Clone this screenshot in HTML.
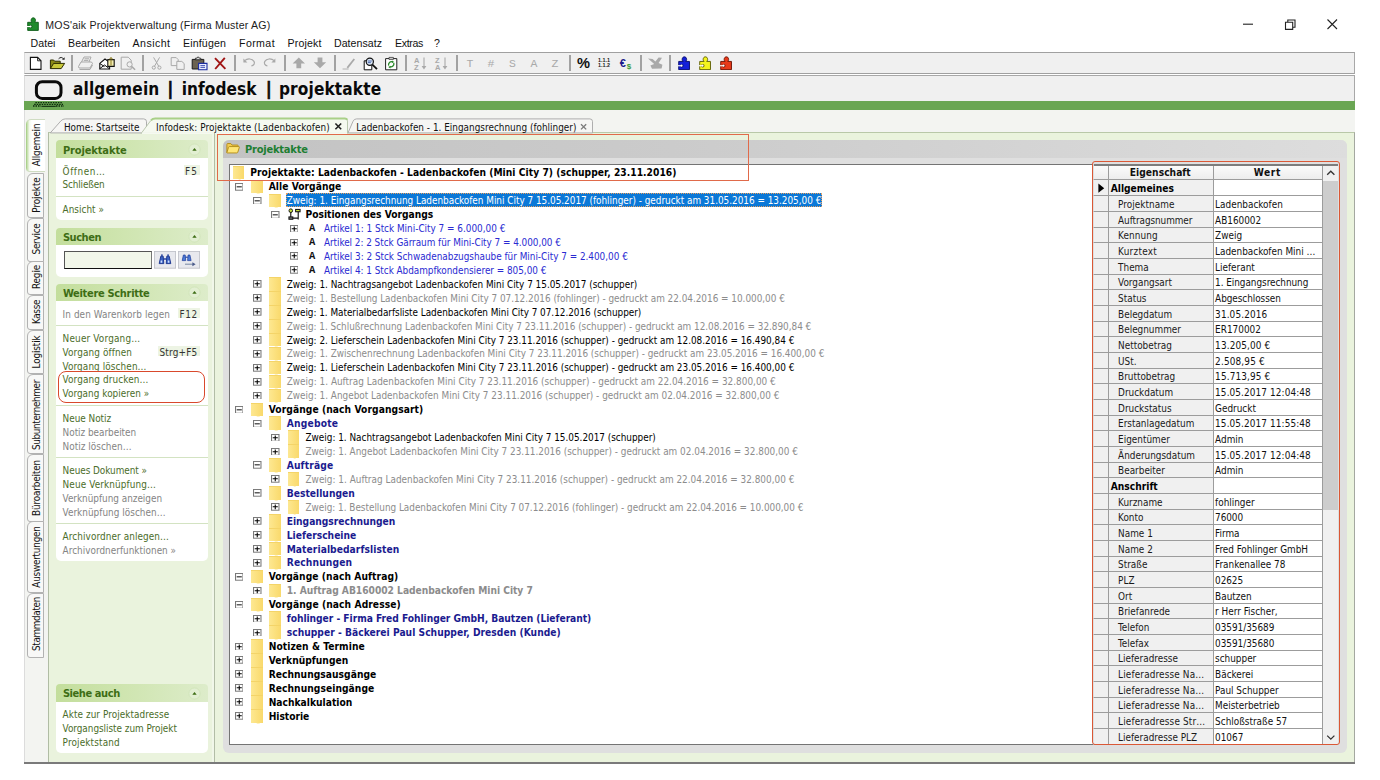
<!DOCTYPE html>
<html lang="de">
<head>
<meta charset="utf-8">
<title>MOS'aik Projektverwaltung (Firma Muster AG)</title>
<style>
html,body{margin:0;padding:0;background:#fff;}
body{width:1380px;height:780px;overflow:hidden;position:relative;font:9.9px 'DejaVu Sans Condensed','Liberation Sans',sans-serif;color:#000;}
#app{position:absolute;left:0;top:0;width:1380px;height:780px;overflow:hidden;background:#fff;}
#app div,#app span,#app svg{position:absolute;}
.t{white-space:pre;font:9.9px 'DejaVu Sans Condensed','Liberation Sans',sans-serif;}
.t.b{font:bold 10.2px 'DejaVu Sans Condensed','Liberation Sans',sans-serif;}
.fo{width:11.6px;height:13.6px;background:linear-gradient(90deg,#fde892 0%,#fbdf7a 60%,#f9d96c 100%);box-shadow:inset 0 1px 0 #f4d468,1.2px 5px 0 -4.500px #fae382;}
.sep{width:1.5px;height:16.4px;top:54.8px;background:#a2a2a2;}
</style>
</head>
<body>
<div id="app">
<span class="t" style="font:10.6px 'Liberation Sans',sans-serif;left:45.30px;top:17.79px;line-height:14px;color:#1c1c1c;letter-spacing:0.193px;">MOS'aik Projektverwaltung (Firma Muster AG)</span>
<svg style="left:26.5px;top:16.8px" width="12.0" height="14.0" viewBox="0 0 12 14"><path d="M0.700 5.300h4.300c-1.600-1.200-1-4.500 1.300-4.500s2.900 3.300 1.300 4.500h3.700v8.100h-10.600z" fill="#1f8a2c" stroke="#0c5a16" stroke-width="0.900"/><circle cx="3.700" cy="9.500" r="1.700" fill="#0c5a16"/><circle cx="3.500" cy="9.500" r="1.050" fill="#fff"/><path d="M0 9h3.400v1.100h-3.400z" fill="#fff"/></svg>
<svg style="left:1240px;top:14px" width="110" height="22" viewBox="0 0 110 22"><g fill="none" stroke="#222" stroke-width="1.1"><path d="M3 10.2h10"/><path d="M45.5 8.2h7.2v7.2h-7.2z M47.8 8.2v-2.2h7.2v7.2h-2.2"/><path d="M87.5 5.5l9.5 9.5M97 5.5l-9.5 9.5"/></g></svg>
<span class="t" style="font:10.6px 'Liberation Sans',sans-serif;left:30.50px;top:36.39px;line-height:14px;color:#111;letter-spacing:0.053px;">Datei</span>
<span class="t" style="font:10.6px 'Liberation Sans',sans-serif;left:68.00px;top:36.39px;line-height:14px;color:#111;letter-spacing:0.075px;">Bearbeiten</span>
<span class="t" style="font:10.6px 'Liberation Sans',sans-serif;left:132.50px;top:36.39px;line-height:14px;color:#111;letter-spacing:0.464px;">Ansicht</span>
<span class="t" style="font:10.6px 'Liberation Sans',sans-serif;left:183.00px;top:36.39px;line-height:14px;color:#111;letter-spacing:0.146px;">Einfügen</span>
<span class="t" style="font:10.6px 'Liberation Sans',sans-serif;left:239.00px;top:36.39px;line-height:14px;color:#111;letter-spacing:0.406px;">Format</span>
<span class="t" style="font:10.6px 'Liberation Sans',sans-serif;left:287.50px;top:36.39px;line-height:14px;color:#111;letter-spacing:0.145px;">Projekt</span>
<span class="t" style="font:10.6px 'Liberation Sans',sans-serif;left:334.00px;top:36.39px;line-height:14px;color:#111;letter-spacing:0.033px;">Datensatz</span>
<span class="t" style="font:10.6px 'Liberation Sans',sans-serif;left:395.00px;top:36.39px;line-height:14px;color:#111;letter-spacing:-0.339px;">Extras</span>
<span class="t" style="font:10.6px 'Liberation Sans',sans-serif;left:434.00px;top:36.39px;line-height:14px;color:#111;">?</span>
<div style="position:absolute;left:24.00px;top:52.00px;width:1331.00px;height:21.50px;background:#f0f0f0;border-top:1.3px solid #a0a0a0;border-bottom:1.3px solid #a0a0a0;border-left:1px solid #dcdcdc;border-right:1px solid #a8a8a8;box-sizing:border-box;"></div>
<div class="sep" style="left:71.2px"></div>
<div class="sep" style="left:142.2px"></div>
<div class="sep" style="left:234.2px"></div>
<div class="sep" style="left:284.2px"></div>
<div class="sep" style="left:334.2px"></div>
<div class="sep" style="left:405.2px"></div>
<div class="sep" style="left:456.2px"></div>
<div class="sep" style="left:569.2px"></div>
<div class="sep" style="left:640.2px"></div>
<div class="sep" style="left:669.2px"></div>
<svg style="left:24px;top:52px" width="720" height="22" viewBox="24 52 720 22" font-family="Liberation Sans,sans-serif"><path d="M30.4 57.4h7.2l3.4 3.4v8.6h-10.6z" fill="#fff" stroke="#111" stroke-width="1.1"/><path d="M37.6 57.4v3.4h3.4" fill="none" stroke="#111" stroke-width="0.9"/><path d="M50.4 68.6v-8.6h3.2l1 1.2h5.6v2.2" fill="#8a8a18" stroke="#2c2c00" stroke-width="1"/><path d="M50.4 68.6l3.2-5.2h11l-3.4 5.2z" fill="#c9c93a" stroke="#2c2c00" stroke-width="1"/><path d="M58.6 58.8c1.6-1.8 3.8-1.8 5 0.2" fill="none" stroke="#222" stroke-width="1"/><path d="M64.6 57.2v2.6h-2.6z" fill="#222"/><g fill="none" stroke="#a9a9a9" stroke-width="1"><path d="M81.5 62l2.5-5h7l-2 5"/><path d="M78.5 66.5l2.5-4.5h10.5l1 1.5-2.5 4.5h-11z"/><path d="M79.5 69.5h10.5l2.5-4.5"/><path d="M84.5 58.8h4.5M83.8 60.4h4.5"/></g><path d="M99.8 63.4l5.2-4.4 4.6 3.2v6.8h-9.8z" fill="#fff" stroke="#111" stroke-width="1.1"/><path d="M99.8 68.6l4.8-3.6 4.6 3.6M99.9 63.6l4.6 3" fill="none" stroke="#111" stroke-width="1"/><path d="M107.8 66.4v-6.8h6.4v6.8z" fill="#f3ecb0" stroke="#111" stroke-width="1.1"/><path d="M111 65.4v-7.6M109.3 59.4l1.7-2 1.7 2" fill="none" stroke="#8a7a20" stroke-width="1"/><g fill="none" stroke="#a9a9a9" stroke-width="1"><path d="M121.2 57.2h7l3 3v9h-10z"/><circle cx="129.6" cy="64.4" r="2.6" fill="#f0f0f0"/><path d="M131.5 66.4l3.6 3.4" stroke-width="1.5"/></g><g fill="none" stroke="#a9a9a9" stroke-width="1"><path d="M153.6 57.4l5.2 9M159.6 57.4l-5.2 9"/><circle cx="153.8" cy="67.6" r="1.6"/><circle cx="159.4" cy="67.6" r="1.6"/></g><g fill="#f0f0f0" stroke="#a9a9a9" stroke-width="1"><path d="M171.2 57.6h5l2 2v6h-7z"/><path d="M176.8 61.4h5l2.4 2.2v5.8h-7.4z"/></g><path d="M192.2 59.4h11.6v9.6h-11.6z" fill="#6b6250" stroke="#1a1a1a" stroke-width="1"/><path d="M195.4 59.8v-1.6h1.4l0.8-1.2h1l0.8 1.2h1.4v1.6z" fill="#d8d8d8" stroke="#1a1a1a" stroke-width="0.8"/><path d="M198.6 63.4h8.4v6.4h-8.4z" fill="#e8ecff" stroke="#1c2ca0" stroke-width="1.1"/><path d="M200.4 65.6h4.6M200.4 67.4h4.6" stroke="#1c2ca0" stroke-width="0.8"/><path d="M215 58.2l10.4 10.6M224.8 57.8l-9.6 11.2" fill="none" stroke="#a01414" stroke-width="1.9"/><g fill="none" stroke="#a9a9a9" stroke-width="1.2"><path d="M244.6 60.6c3.2-2.6 7.6-2 9.4 0.8 1.2 2.2-0.4 4.2-2.6 4.4"/><path d="M274.2 60.6c-3.2-2.6-7.6-2-9.4 0.8-1.2 2.200.4 4.200 2.600 4.400"/></g><path d="M243.4 58.4v4h4z" fill="#a9a9a9"/><path d="M275.400 58.400v4h-4z" fill="#a9a9a9"/><path d="M298.800 57.600l6.200 6h-3.800v4.600h-4.800v-4.600h-3.800z" fill="#a9a9a9"/><path d="M320 68.200l6.200-6h-3.800v-4.600h-4.800v4.600h-3.800z" fill="#a9a9a9"/><path d="M346.600 67.200l7-8.800 1.400 1.200-7 8.800z" fill="#a9a9a9"/><path d="M342.600 69h6" stroke="#a9a9a9" stroke-width="0.9"/><path d="M364.200 60.800h7.600v9h-7.600z" fill="#fff" stroke="#111" stroke-width="1"/><circle cx="369.800" cy="61.800" r="3.600" fill="#d8e4f4" stroke="#111" stroke-width="1.200"/><path d="M367.800 61h4M367.800 62.600h3" stroke="#2a4a9a" stroke-width="0.800"/><path d="M372.400 64.600l4.600 4.600" stroke="#111" stroke-width="1.800"/><path d="M385.600 58.600h11.200v11.200h-11.200z" fill="#fff" stroke="#222" stroke-width="1"/><path d="M389 57.400h4.400v2h-4.400z" fill="#ddd" stroke="#222" stroke-width="0.700"/><path d="M388.600 65.600c-0.600-2.600 1.600-4.600 4-3.800M393.800 62.800c0.600 2.600-1.600 4.600-4 3.800" fill="none" stroke="#2a8a2a" stroke-width="1.300"/><path d="M392 60.400l2.200 1.600-2.400 1.200zM390.400 68.600l-2.200-1.600 2.400-1.200z" fill="#2a8a2a"/><g fill="#a9a9a9" font-size="7.500" font-weight="bold"><text x="414" y="62.800">A</text><text x="414" y="69.600">Z</text><text x="435" y="62.800">Z</text><text x="435" y="69.600">A</text></g><g stroke="#a9a9a9" stroke-width="1.100" fill="#a9a9a9"><path d="M424 57.600v9.600"/><path d="M421.600 66l2.400 3.400 2.400-3.400z" stroke="none"/><path d="M445 57.600v9.600"/><path d="M442.600 66l2.400 3.400 2.400-3.400z" stroke="none"/></g><g fill="#a9a9a9" font-size="11.500" text-anchor="middle" font-family="Liberation Mono,monospace"><text x="470" y="67">T</text><text x="491" y="67">#</text><text x="512.500" y="67">S</text><text x="534" y="67">A</text><text x="555" y="67">Z</text></g><text x="577" y="68.200" font-size="14" font-weight="bold" fill="#111" textLength="13" lengthAdjust="spacingAndGlyphs">%</text><g fill="#1c1c1c" font-size="6" font-weight="bold"><text x="598" y="62" textLength="12" lengthAdjust="spacingAndGlyphs">1.1.1</text><text x="598" y="67.400" textLength="12" lengthAdjust="spacingAndGlyphs">1.1.2</text></g><path d="M598.500 69.400h3.500" stroke="#888" stroke-width="0.600" stroke-dasharray="1 0.600"/><text x="619.800" y="66.800" font-size="11" font-weight="bold" fill="#1a1a8a">€</text><text x="626.800" y="69" font-size="8" font-weight="bold" fill="#3a9a3a">$</text><path d="M648 58.600l4.600 0.400 2.800 2.600 3.200-4 3.400 0.200-3.400 5.200 3.800 1.800-0.800 3.600-9.600 0.400-1.600-3.200 3.800-1.600z" fill="#a9a9a9"/></svg>
<svg style="left:677.6px;top:55.6px" width="12.2" height="14.3" viewBox="0 0 12 14"><path d="M0.700 5.300h4.300c-1.600-1.200-1-4.500 1.300-4.500s2.900 3.300 1.300 4.500h3.700v8.100h-10.600z" fill="#1420d8" stroke="#060a6a" stroke-width="0.900"/><circle cx="3.700" cy="9.500" r="1.700" fill="#060a6a"/><circle cx="3.500" cy="9.500" r="1.050" fill="#fff"/><path d="M0 9h3.400v1.100h-3.400z" fill="#fff"/></svg>
<svg style="left:698.6px;top:55.6px" width="12.2" height="14.3" viewBox="0 0 12 14"><path d="M0.700 5.300h4.300c-1.600-1.200-1-4.500 1.300-4.500s2.900 3.300 1.300 4.500h3.700v8.100h-10.600z" fill="#f4f41e" stroke="#5a5a00" stroke-width="0.900"/><circle cx="3.700" cy="9.500" r="1.700" fill="#5a5a00"/><circle cx="3.500" cy="9.500" r="1.050" fill="#fff"/><path d="M0 9h3.400v1.100h-3.400z" fill="#fff"/></svg>
<svg style="left:720.2px;top:55.6px" width="12.2" height="14.3" viewBox="0 0 12 14"><path d="M0.700 5.300h4.300c-1.600-1.200-1-4.500 1.300-4.500s2.900 3.300 1.300 4.500h3.700v8.100h-10.600z" fill="#e83a1a" stroke="#6a1000" stroke-width="0.900"/><circle cx="3.700" cy="9.500" r="1.700" fill="#6a1000"/><circle cx="3.500" cy="9.500" r="1.050" fill="#fff"/><path d="M0 9h3.400v1.100h-3.400z" fill="#fff"/></svg>
<div style="position:absolute;left:24.00px;top:75.20px;width:1331.00px;height:26.00px;background:#f0f0f0;border-top:1.2px solid #a8a8a8;border-left:1px solid #dcdcdc;border-right:1px solid #a8a8a8;box-sizing:border-box;"></div>
<div style="position:absolute;left:24.00px;top:100.80px;width:1331.00px;height:9.60px;background:#6aa653;"></div>
<svg style="left:30px;top:78px" width="40" height="30" viewBox="30 78 40 30"><rect x="36.400" y="81.700" width="24.600" height="16.800" rx="5.800" ry="5.800" fill="#f0f0f0" stroke="#0a0a0a" stroke-width="3"/><g stroke="#0c2a0c" stroke-width="1.300" stroke-dasharray="1.500 1"><path d="M35.400 102.600h26.400"/><path d="M34.200 104.300h28.800"/><path d="M33 106h8M56 106h8"/></g><path d="M41.400 106.300h14.400" stroke="#0c2a0c" stroke-width="1.100"/></svg>
<span class="t" style="font:bold 17.1px 'DejaVu Sans Condensed','Liberation Sans',sans-serif;left:72.90px;top:79.35px;line-height:20px;color:#0a0a0a;letter-spacing:0.174px;">allgemein</span>
<span class="t" style="font:bold 17.1px 'DejaVu Sans Condensed','Liberation Sans',sans-serif;left:167.40px;top:79.35px;line-height:20px;color:#0a0a0a;-webkit-text-stroke:0.700px #0a0a0a;">|</span>
<span class="t" style="font:bold 17.1px 'DejaVu Sans Condensed','Liberation Sans',sans-serif;left:181.70px;top:79.35px;line-height:20px;color:#0a0a0a;letter-spacing:0.063px;">infodesk</span>
<span class="t" style="font:bold 17.1px 'DejaVu Sans Condensed','Liberation Sans',sans-serif;left:265.90px;top:79.35px;line-height:20px;color:#0a0a0a;-webkit-text-stroke:0.700px #0a0a0a;">|</span>
<span class="t" style="font:bold 17.1px 'DejaVu Sans Condensed','Liberation Sans',sans-serif;left:278.90px;top:79.35px;line-height:20px;color:#0a0a0a;letter-spacing:0.143px;">projektakte</span>
<div style="position:absolute;left:24.00px;top:110.40px;width:1331.00px;height:653.00px;background:#f3f4f1;border-left:1px solid #dcdcdc;box-sizing:border-box;"></div>
<div style="position:absolute;left:24.00px;top:762.40px;width:1331.00px;height:1.60px;background:#7a7a7a;"></div>
<div style="position:absolute;left:26.20px;top:118.60px;width:18.40px;height:53.70px;background:linear-gradient(90deg,#9cc97a 0,#c9e1b2 1.500px,#f4f9ee 3.500px,#fff 6px);border-top:1px solid #cfdcc2;border-bottom:1px solid #cfdcc2;border-radius:5px 0 0 4px;box-sizing:border-box;"></div>
<span class="t" style="left:36.800px;top:145.15px;line-height:12px;letter-spacing:-0.184px;transform:translate(-50%,-50%) rotate(-90deg);color:#111">Allgemein</span>
<div style="position:absolute;left:27.40px;top:172.60px;width:16.20px;height:45.40px;background:#f8f8f7;border:1px solid #b2b2b2;border-radius:6px 0 0 3px;box-sizing:border-box;"></div>
<span class="t" style="left:36.800px;top:195.05px;line-height:12px;letter-spacing:-0.099px;transform:translate(-50%,-50%) rotate(-90deg);color:#111">Projekte</span>
<div style="position:absolute;left:27.40px;top:217.60px;width:16.20px;height:44.10px;background:#f8f8f7;border:1px solid #b2b2b2;border-radius:6px 0 0 3px;box-sizing:border-box;"></div>
<span class="t" style="left:36.800px;top:238.50px;line-height:12px;letter-spacing:-0.263px;transform:translate(-50%,-50%) rotate(-90deg);color:#111">Service</span>
<div style="position:absolute;left:27.40px;top:261.30px;width:16.20px;height:33.90px;background:#f8f8f7;border:1px solid #b2b2b2;border-radius:6px 0 0 3px;box-sizing:border-box;"></div>
<span class="t" style="left:36.800px;top:277.10px;line-height:12px;letter-spacing:-0.116px;transform:translate(-50%,-50%) rotate(-90deg);color:#111">Regie</span>
<div style="position:absolute;left:27.40px;top:294.80px;width:16.20px;height:35.50px;background:#f8f8f7;border:1px solid #b2b2b2;border-radius:6px 0 0 3px;box-sizing:border-box;"></div>
<span class="t" style="left:36.800px;top:312.30px;line-height:12px;letter-spacing:-0.366px;transform:translate(-50%,-50%) rotate(-90deg);color:#111">Kasse</span>
<div style="position:absolute;left:27.40px;top:329.90px;width:16.20px;height:44.30px;background:#f8f8f7;border:1px solid #b2b2b2;border-radius:6px 0 0 3px;box-sizing:border-box;"></div>
<span class="t" style="left:36.800px;top:351.90px;line-height:12px;letter-spacing:-0.131px;transform:translate(-50%,-50%) rotate(-90deg);color:#111">Logistik</span>
<div style="position:absolute;left:27.40px;top:373.80px;width:16.20px;height:80.40px;background:#f8f8f7;border:1px solid #b2b2b2;border-radius:6px 0 0 3px;box-sizing:border-box;"></div>
<span class="t" style="left:36.800px;top:414.55px;line-height:12px;letter-spacing:-0.372px;transform:translate(-50%,-50%) rotate(-90deg);color:#111">Subunternehmer</span>
<div style="position:absolute;left:27.40px;top:453.80px;width:16.20px;height:67.90px;background:#f8f8f7;border:1px solid #b2b2b2;border-radius:6px 0 0 3px;box-sizing:border-box;"></div>
<span class="t" style="left:36.800px;top:487.75px;line-height:12px;letter-spacing:-0.147px;transform:translate(-50%,-50%) rotate(-90deg);color:#111">Büroarbeiten</span>
<div style="position:absolute;left:27.40px;top:521.30px;width:16.20px;height:71.70px;background:#f8f8f7;border:1px solid #b2b2b2;border-radius:6px 0 0 3px;box-sizing:border-box;"></div>
<span class="t" style="left:36.800px;top:556.50px;line-height:12px;letter-spacing:-0.235px;transform:translate(-50%,-50%) rotate(-90deg);color:#111">Auswertungen</span>
<div style="position:absolute;left:27.40px;top:592.60px;width:16.20px;height:65.10px;background:#f8f8f7;border:1px solid #b2b2b2;border-radius:6px 0 0 3px;box-sizing:border-box;"></div>
<span class="t" style="left:36.800px;top:624.30px;line-height:12px;letter-spacing:-0.375px;transform:translate(-50%,-50%) rotate(-90deg);color:#111">Stammdaten</span>
<div style="position:absolute;left:47.70px;top:132.00px;width:1307.30px;height:630.40px;background:#eaf3dd;border-top:1.200px solid #b9c8a8;border-left:1px solid #b0bca4;border-right:1.200px solid #a4a8a0;box-sizing:border-box;"></div>
<svg style="left:46px;top:116px" width="560" height="18" viewBox="46 116 560 18"><path d="M50.300 132.900l10.600-12q1.800-2 4.400-2h78.400q2.800 0 2.800 2.800v11.200z" fill="#f6f6f4" stroke="#a6a6a6" stroke-width="0.900"/><path d="M348 132.900l5-11.600q1-2.400 3.600-2.400h233.300q2.600 0 2.600 2.600v11.400z" fill="#f6f6f4" stroke="#a6a6a6" stroke-width="0.900"/><path d="M141.200 133.400l9.400-12.600q1.800-2.300 4.600-2.300h189.700q2.600 0 2.600 2.600v12.300z" fill="#f5f9f0" stroke="#b3c2a6" stroke-width="0.900"/><path d="M151 120.200q1.800-1.700 4.200-1.700h189.700q1.800 0 2.400 1.200" fill="none" stroke="#a9d088" stroke-width="2"/><path d="M141.800 133.500h205.300" stroke="#f5f9f0" stroke-width="1.800"/><path d="M335.400 123.500l5.800 5.800M341.200 123.500l-5.800 5.800" stroke="#222" stroke-width="1.600"/><path d="M581 124.200l5.200 5.200M586.200 124.200l-5.200 5.200" stroke="#7a7a7a" stroke-width="1.300"/></svg>
<span class="t" style="left:63.90px;top:120.60px;line-height:14px;color:#111;letter-spacing:0.026px;">Home: Startseite</span>
<span class="t" style="left:156.00px;top:120.60px;line-height:14px;color:#111;letter-spacing:0.074px;">Infodesk: Projektakte (Ladenbackofen)</span>
<span class="t" style="left:356.30px;top:120.60px;line-height:14px;color:#111;letter-spacing:0.012px;">Ladenbackofen - 1. Eingangsrechnung (fohlinger)</span>
<div style="position:absolute;left:212.20px;top:133.40px;width:1.60px;height:629.00px;background:#f1f7e9;"></div>
<div style="position:absolute;left:214.10px;top:133.40px;width:1.10px;height:629.00px;background:#b2bda6;"></div>
<div style="position:absolute;left:55.80px;top:140.30px;width:152.20px;height:17.70px;background:linear-gradient(90deg,#c3de9c 0%,#cfe5b0 45%,#ddecca 100%);border-radius:4px 4px 0 0;"></div>
<div style="position:absolute;left:55.80px;top:158.00px;width:152.20px;height:62.00px;background:#fff;border-radius:0 0 5px 5px;"></div>
<span class="t" style="font:bold 11px 'DejaVu Sans Condensed','Liberation Sans',sans-serif;left:62.90px;top:143.55px;line-height:14px;color:#3d6d15;letter-spacing:-0.124px;">Projektakte</span>
<svg style="left:188px;top:142.95px" width="13" height="13" viewBox="0 0 13 13"><circle cx="6.500" cy="6.500" r="5.600" fill="#e2efd2" stroke="#cfe3b8" stroke-width="0.800"/><path d="M4.300 7.700l2.200-2.600 2.200 2.600z" fill="#3d6d15"/></svg>
<span class="t" style="left:62.60px;top:164.50px;line-height:14px;color:#4b6d2a;letter-spacing:0.567px;">Öffnen…</span>
<div style="position:absolute;left:183.60px;top:164.70px;width:16.60px;height:10.80px;background:#edf4e4;"></div>
<span class="t" style="left:185.10px;top:164.50px;line-height:14px;color:#333;letter-spacing:0.967px;">F5</span>
<span class="t" style="left:62.60px;top:178.30px;line-height:14px;color:#4b6d2a;letter-spacing:-0.155px;">Schließen</span>
<div style="position:absolute;left:55.80px;top:196.20px;width:152.20px;height:1.00px;background:#d3e3c2;"></div>
<span class="t" style="left:62.60px;top:202.50px;line-height:14px;color:#4b6d2a;letter-spacing:0.034px;">Ansicht »</span>
<div style="position:absolute;left:55.80px;top:227.60px;width:152.20px;height:17.40px;background:linear-gradient(90deg,#c3de9c 0%,#cfe5b0 45%,#ddecca 100%);border-radius:4px 4px 0 0;"></div>
<div style="position:absolute;left:55.80px;top:245.00px;width:152.20px;height:31.70px;background:#fff;border-radius:0 0 5px 5px;"></div>
<span class="t" style="font:bold 11px 'DejaVu Sans Condensed','Liberation Sans',sans-serif;left:62.90px;top:230.70px;line-height:14px;color:#3d6d15;letter-spacing:-0.443px;">Suchen</span>
<svg style="left:188px;top:230.10px" width="13" height="13" viewBox="0 0 13 13"><circle cx="6.500" cy="6.500" r="5.600" fill="#e2efd2" stroke="#cfe3b8" stroke-width="0.800"/><path d="M4.300 7.700l2.200-2.600 2.200 2.600z" fill="#3d6d15"/></svg>
<div style="position:absolute;left:63.60px;top:251.30px;width:88.60px;height:17.60px;background:#f2f7ea;border:1.4px solid #555;border-bottom-color:#111;border-right-color:#777;box-sizing:border-box;"></div>
<svg style="left:154px;top:251.400px" width="22" height="17.600" viewBox="0 0 22 17.600"><rect x="0.400" y="0.400" width="21.200" height="16.800" fill="#e8e9ee" stroke="#bfc1c8" stroke-width="0.900"/><path d="M5.200 12.600l1.600-7.400h2.400l0.600 7.400zM12.200 12.600l0.600-7.400h2.400l1.600 7.400z" fill="#3a62c4" stroke="#15308a" stroke-width="0.900"/><path d="M6.600 9.400h1.600v2.400h-1.600zM13.800 9.400h1.600v2.400h-1.600z" fill="#cfe0ff"/><path d="M9.600 8h2.800" stroke="#1a3a9a" stroke-width="1.400"/><path d="M7 4.200h1.800M13.200 4.200h1.800" stroke="#1a3a9a" stroke-width="1.200"/></svg>
<svg style="left:178.3px;top:251.400px" width="22" height="17.600" viewBox="0 0 22 17.600"><rect x="0.400" y="0.400" width="21.200" height="16.800" fill="#e8e9ee" stroke="#bfc1c8" stroke-width="0.900"/><path d="M4.200 9.600l1.200-5.600h1.800l0.500 5.600zM9.600 9.600l0.500-5.600h1.800l1.200 5.600z" fill="#4c7ad6" stroke="#1a3a9a" stroke-width="0.700"/><path d="M7.500 6.200h2.300" stroke="#1a3a9a" stroke-width="1.100"/><path d="M7 13.200h8" stroke="#6a7a9a" stroke-width="0.900"/><path d="M14.400 11.200l3.200 2-3.200 2z" fill="#4a5a8a"/></svg>
<div style="position:absolute;left:55.80px;top:284.20px;width:152.20px;height:16.60px;background:linear-gradient(90deg,#c3de9c 0%,#cfe5b0 45%,#ddecca 100%);border-radius:4px 4px 0 0;"></div>
<div style="position:absolute;left:55.80px;top:300.80px;width:152.20px;height:260.00px;background:#fff;border-radius:0 0 5px 5px;"></div>
<span class="t" style="font:bold 11px 'DejaVu Sans Condensed','Liberation Sans',sans-serif;left:62.90px;top:286.90px;line-height:14px;color:#3d6d15;letter-spacing:-0.313px;">Weitere Schritte</span>
<svg style="left:188px;top:286.30px" width="13" height="13" viewBox="0 0 13 13"><circle cx="6.500" cy="6.500" r="5.600" fill="#e2efd2" stroke="#cfe3b8" stroke-width="0.800"/><path d="M4.300 7.700l2.200-2.600 2.200 2.600z" fill="#3d6d15"/></svg>
<span class="t" style="left:62.60px;top:307.50px;line-height:14px;color:#848484;letter-spacing:0.074px;">In den Warenkorb legen</span>
<div style="position:absolute;left:178.00px;top:307.70px;width:22.20px;height:10.80px;background:#edf4e4;"></div>
<span class="t" style="left:179.50px;top:307.50px;line-height:14px;color:#333;letter-spacing:0.626px;">F12</span>
<div style="position:absolute;left:55.80px;top:324.80px;width:152.20px;height:1.00px;background:#d3e3c2;"></div>
<span class="t" style="left:62.60px;top:331.60px;line-height:14px;color:#4b6d2a;letter-spacing:0.182px;">Neuer Vorgang…</span>
<span class="t" style="left:62.60px;top:345.50px;line-height:14px;color:#4b6d2a;letter-spacing:0.122px;">Vorgang öffnen</span>
<div style="position:absolute;left:158.00px;top:345.70px;width:42.20px;height:10.80px;background:#edf4e4;"></div>
<span class="t" style="left:159.50px;top:345.50px;line-height:14px;color:#333;letter-spacing:0.221px;">Strg+F5</span>
<span class="t" style="left:62.60px;top:359.50px;line-height:14px;color:#4b6d2a;letter-spacing:0.098px;">Vorgang löschen…</span>
<span class="t" style="left:62.60px;top:373.30px;line-height:14px;color:#4b6d2a;letter-spacing:0.126px;">Vorgang drucken…</span>
<span class="t" style="left:62.60px;top:387.10px;line-height:14px;color:#4b6d2a;letter-spacing:0.039px;">Vorgang kopieren »</span>
<div style="position:absolute;left:55.80px;top:404.80px;width:152.20px;height:1.00px;background:#d3e3c2;"></div>
<span class="t" style="left:62.60px;top:411.60px;line-height:14px;color:#4b6d2a;letter-spacing:-0.023px;">Neue Notiz</span>
<span class="t" style="left:62.60px;top:425.50px;line-height:14px;color:#848484;letter-spacing:-0.023px;">Notiz bearbeiten</span>
<span class="t" style="left:62.60px;top:439.50px;line-height:14px;color:#848484;letter-spacing:0.032px;">Notiz löschen…</span>
<div style="position:absolute;left:55.80px;top:457.10px;width:152.20px;height:1.00px;background:#d3e3c2;"></div>
<span class="t" style="left:62.60px;top:463.80px;line-height:14px;color:#4b6d2a;letter-spacing:-0.032px;">Neues Dokument »</span>
<span class="t" style="left:62.60px;top:477.80px;line-height:14px;color:#4b6d2a;letter-spacing:0.121px;">Neue Verknüpfung…</span>
<span class="t" style="left:62.60px;top:491.60px;line-height:14px;color:#848484;letter-spacing:-0.017px;">Verknüpfung anzeigen</span>
<span class="t" style="left:62.60px;top:505.50px;line-height:14px;color:#848484;letter-spacing:0.031px;">Verknüpfung löschen…</span>
<div style="position:absolute;left:55.80px;top:522.80px;width:152.20px;height:1.00px;background:#d3e3c2;"></div>
<span class="t" style="left:62.60px;top:530.00px;line-height:14px;color:#4b6d2a;letter-spacing:0.090px;">Archivordner anlegen…</span>
<span class="t" style="left:62.60px;top:543.80px;line-height:14px;color:#848484;letter-spacing:0.022px;">Archivordnerfunktionen »</span>
<div style="position:absolute;left:58.20px;top:370.70px;width:146.90px;height:31.90px;border:1.800px solid #d9492c;border-radius:8px;box-sizing:border-box;"></div>
<div style="position:absolute;left:55.80px;top:684.00px;width:152.20px;height:17.60px;background:linear-gradient(90deg,#c3de9c 0%,#cfe5b0 45%,#ddecca 100%);border-radius:4px 4px 0 0;"></div>
<div style="position:absolute;left:55.80px;top:701.60px;width:152.20px;height:51.20px;background:#fff;border-radius:0 0 5px 5px;"></div>
<span class="t" style="font:bold 11px 'DejaVu Sans Condensed','Liberation Sans',sans-serif;left:62.90px;top:687.20px;line-height:14px;color:#3d6d15;letter-spacing:-0.418px;">Siehe auch</span>
<svg style="left:188px;top:686.60px" width="13" height="13" viewBox="0 0 13 13"><circle cx="6.500" cy="6.500" r="5.600" fill="#e2efd2" stroke="#cfe3b8" stroke-width="0.800"/><path d="M4.300 7.700l2.200-2.600 2.200 2.600z" fill="#3d6d15"/></svg>
<span class="t" style="left:62.60px;top:707.60px;line-height:14px;color:#4b6d2a;letter-spacing:0.070px;">Akte zur Projektadresse</span>
<span class="t" style="left:62.60px;top:721.80px;line-height:14px;color:#4b6d2a;letter-spacing:-0.025px;">Vorgangsliste zum Projekt</span>
<span class="t" style="left:62.60px;top:735.50px;line-height:14px;color:#4b6d2a;letter-spacing:0.146px;">Projektstand</span>
<div style="position:absolute;left:222.50px;top:139.90px;width:1124.20px;height:612.70px;background:#dfdfdf;border-radius:6px;"></div>
<div style="position:absolute;left:222.50px;top:139.90px;width:1124.20px;height:18.00px;background:linear-gradient(90deg,#c3c3c3 0%,#cbcbcb 40%,#d8d8d8 85%,#dddddd 100%);border-radius:6px 6px 0 0;"></div>
<svg style="left:225.800px;top:142.400px" width="14.200" height="12.400" viewBox="0 0 16 13" preserveAspectRatio="none"><path d="M1 11.200v-8.600q0-1 1-1h3.400l1.400 1.600h6q1 0 1 1v1.400" fill="#f2cc50" stroke="#b08a18" stroke-width="1"/><path d="M1 11.200l1.800-5.600q0.300-0.800 1.200-0.800h10.400q0.900 0 0.600 0.900l-1.700 5q-0.300 0.800-1.100 0.800h-10.600q-0.800 0-0.600-0.300z" fill="#ffe676" stroke="#b08a18" stroke-width="1"/></svg>
<span class="t" style="font:bold 11px 'DejaVu Sans Condensed','Liberation Sans',sans-serif;left:244.90px;top:142.80px;line-height:14px;color:#1e7e32;letter-spacing:-0.197px;">Projektakte</span>
<div style="position:absolute;left:229.20px;top:163.80px;width:863.80px;height:581.60px;background:#fff;border:1.600px solid #747474;border-right:none;box-sizing:border-box;"></div>
<div class="fo" style="left:232.60px;top:165.70px"></div>
<span class="t b" style="left:250.30px;top:166.40px;line-height:14px;color:#000;letter-spacing:0.041px;">Projektakte: Ladenbackofen - Ladenbackofen (Mini City 7) (schupper, 23.11.2016)</span>
<svg style="left:234.65px;top:182.83px" width="8.500" height="7.700" viewBox="0 0 8 8" preserveAspectRatio="none"><rect x="0.500" y="0.500" width="7" height="7" fill="#fff" stroke="#787878"/><path d="M1.600 4h4.800" stroke="#000" stroke-width="1"/></svg>
<div class="fo" style="left:251.00px;top:179.63px"></div>
<span class="t b" style="left:268.70px;top:180.33px;line-height:14px;color:#000;letter-spacing:0.032px;">Alle Vorgänge</span>
<svg style="left:253.05px;top:196.76px" width="8.500" height="7.700" viewBox="0 0 8 8" preserveAspectRatio="none"><rect x="0.500" y="0.500" width="7" height="7" fill="#fff" stroke="#787878"/><path d="M1.600 4h4.800" stroke="#000" stroke-width="1"/></svg>
<div class="fo" style="left:269.40px;top:193.56px"></div>
<div style="position:absolute;left:285.70px;top:193.26px;width:536.50px;height:13.50px;background:#0b78d7;outline:1px dotted #e8a060;outline-offset:-1px;"></div>
<span class="t" style="left:286.70px;top:194.26px;line-height:14px;color:#fff;letter-spacing:-0.008px;">Zweig: 1. Eingangsrechnung Ladenbackofen Mini City 7 15.05.2017 (fohlinger) - gedruckt am 31.05.2016 = 13.205,00 €</span>
<svg style="left:271.45px;top:210.69px" width="8.500" height="7.700" viewBox="0 0 8 8" preserveAspectRatio="none"><rect x="0.500" y="0.500" width="7" height="7" fill="#fff" stroke="#787878"/><path d="M1.600 4h4.800" stroke="#000" stroke-width="1"/></svg>
<svg style="left:287.60px;top:208.29px" width="13" height="12.5" viewBox="0 0 14 13" preserveAspectRatio="none"><path d="M3 3.500v7M3 10.500h8M11 3v9" fill="none" stroke="#111" stroke-width="1.200"/><circle cx="3" cy="2.800" r="1.900" fill="#c8e03a" stroke="#111" stroke-width="1"/><rect x="8.200" y="1.500" width="4.800" height="2.400" fill="#c8e03a" stroke="#111" stroke-width="1.100"/><rect x="1" y="9.300" width="4.200" height="2.400" fill="#777" stroke="#111" stroke-width="1.100"/></svg>
<span class="t b" style="left:305.50px;top:208.19px;line-height:14px;color:#000;letter-spacing:-0.007px;">Positionen des Vorgangs</span>
<svg style="left:289.85px;top:224.62px" width="8.500" height="7.700" viewBox="0 0 8 8" preserveAspectRatio="none"><rect x="0.500" y="0.500" width="7" height="7" fill="#fff" stroke="#787878"/><path d="M1.600 4h4.800M4 1.600v4.800" stroke="#000" stroke-width="1"/></svg>
<span class="t" style="font:bold 10.5px 'Liberation Mono',monospace;left:308.90px;top:221.17px;line-height:14px;color:#111;">A</span>
<span class="t" style="left:323.90px;top:222.12px;line-height:14px;color:#2a2ad2;letter-spacing:-0.004px;">Artikel 1: 1 Stck Mini-City 7 = 6.000,00 €</span>
<svg style="left:289.85px;top:238.55px" width="8.500" height="7.700" viewBox="0 0 8 8" preserveAspectRatio="none"><rect x="0.500" y="0.500" width="7" height="7" fill="#fff" stroke="#787878"/><path d="M1.600 4h4.800M4 1.600v4.800" stroke="#000" stroke-width="1"/></svg>
<span class="t" style="font:bold 10.5px 'Liberation Mono',monospace;left:308.90px;top:235.10px;line-height:14px;color:#111;">A</span>
<span class="t" style="left:323.90px;top:236.05px;line-height:14px;color:#2a2ad2;letter-spacing:-0.035px;">Artikel 2: 2 Stck Gärraum für Mini-City 7 = 4.000,00 €</span>
<svg style="left:289.85px;top:252.48px" width="8.500" height="7.700" viewBox="0 0 8 8" preserveAspectRatio="none"><rect x="0.500" y="0.500" width="7" height="7" fill="#fff" stroke="#787878"/><path d="M1.600 4h4.800M4 1.600v4.800" stroke="#000" stroke-width="1"/></svg>
<span class="t" style="font:bold 10.5px 'Liberation Mono',monospace;left:308.90px;top:249.03px;line-height:14px;color:#111;">A</span>
<span class="t" style="left:323.90px;top:249.98px;line-height:14px;color:#2a2ad2;letter-spacing:-0.012px;">Artikel 3: 2 Stck Schwadenabzugshaube für Mini-City 7 = 2.400,00 €</span>
<svg style="left:289.85px;top:266.41px" width="8.500" height="7.700" viewBox="0 0 8 8" preserveAspectRatio="none"><rect x="0.500" y="0.500" width="7" height="7" fill="#fff" stroke="#787878"/><path d="M1.600 4h4.800M4 1.600v4.800" stroke="#000" stroke-width="1"/></svg>
<span class="t" style="font:bold 10.5px 'Liberation Mono',monospace;left:308.90px;top:262.96px;line-height:14px;color:#111;">A</span>
<span class="t" style="left:323.90px;top:263.91px;line-height:14px;color:#2a2ad2;letter-spacing:-0.027px;">Artikel 4: 1 Stck Abdampfkondensierer = 805,00 €</span>
<svg style="left:253.05px;top:280.34px" width="8.500" height="7.700" viewBox="0 0 8 8" preserveAspectRatio="none"><rect x="0.500" y="0.500" width="7" height="7" fill="#fff" stroke="#787878"/><path d="M1.600 4h4.800M4 1.600v4.800" stroke="#000" stroke-width="1"/></svg>
<div class="fo" style="left:269.40px;top:277.14px"></div>
<span class="t" style="left:286.70px;top:277.84px;line-height:14px;color:#000;letter-spacing:-0.005px;">Zweig: 1. Nachtragsangebot Ladenbackofen Mini City 7 15.05.2017 (schupper)</span>
<svg style="left:253.05px;top:294.27px" width="8.500" height="7.700" viewBox="0 0 8 8" preserveAspectRatio="none"><rect x="0.500" y="0.500" width="7" height="7" fill="#fff" stroke="#787878"/><path d="M1.600 4h4.800M4 1.600v4.800" stroke="#000" stroke-width="1"/></svg>
<div class="fo" style="left:269.40px;top:291.07px"></div>
<span class="t" style="left:286.70px;top:291.77px;line-height:14px;color:#8c8c8c;letter-spacing:-0.016px;">Zweig: 1. Bestellung Ladenbackofen Mini City 7 07.12.2016 (fohlinger) - gedruckt am 22.04.2016 = 10.000,00 €</span>
<svg style="left:253.05px;top:308.20px" width="8.500" height="7.700" viewBox="0 0 8 8" preserveAspectRatio="none"><rect x="0.500" y="0.500" width="7" height="7" fill="#fff" stroke="#787878"/><path d="M1.600 4h4.800M4 1.600v4.800" stroke="#000" stroke-width="1"/></svg>
<div class="fo" style="left:269.40px;top:305.00px"></div>
<span class="t" style="left:286.70px;top:305.70px;line-height:14px;color:#000;letter-spacing:-0.031px;">Zweig: 1. Materialbedarfsliste Ladenbackofen Mini City 7 07.12.2016 (schupper)</span>
<svg style="left:253.05px;top:322.13px" width="8.500" height="7.700" viewBox="0 0 8 8" preserveAspectRatio="none"><rect x="0.500" y="0.500" width="7" height="7" fill="#fff" stroke="#787878"/><path d="M1.600 4h4.800M4 1.600v4.800" stroke="#000" stroke-width="1"/></svg>
<div class="fo" style="left:269.40px;top:318.93px"></div>
<span class="t" style="left:286.70px;top:319.63px;line-height:14px;color:#8c8c8c;letter-spacing:-0.016px;">Zweig: 1. Schlußrechnung Ladenbackofen Mini City 7 23.11.2016 (schupper) - gedruckt am 12.08.2016 = 32.890,84 €</span>
<svg style="left:253.05px;top:336.06px" width="8.500" height="7.700" viewBox="0 0 8 8" preserveAspectRatio="none"><rect x="0.500" y="0.500" width="7" height="7" fill="#fff" stroke="#787878"/><path d="M1.600 4h4.800M4 1.600v4.800" stroke="#000" stroke-width="1"/></svg>
<div class="fo" style="left:269.40px;top:332.86px"></div>
<span class="t" style="left:286.70px;top:333.56px;line-height:14px;color:#000;letter-spacing:-0.007px;">Zweig: 2. Lieferschein Ladenbackofen Mini City 7 23.11.2016 (schupper) - gedruckt am 12.08.2016 = 16.490,84 €</span>
<svg style="left:253.05px;top:349.99px" width="8.500" height="7.700" viewBox="0 0 8 8" preserveAspectRatio="none"><rect x="0.500" y="0.500" width="7" height="7" fill="#fff" stroke="#787878"/><path d="M1.600 4h4.800M4 1.600v4.800" stroke="#000" stroke-width="1"/></svg>
<div class="fo" style="left:269.40px;top:346.79px"></div>
<span class="t" style="left:286.70px;top:347.49px;line-height:14px;color:#8c8c8c;letter-spacing:-0.008px;">Zweig: 1. Zwischenrechnung Ladenbackofen Mini City 7 23.11.2016 (schupper) - gedruckt am 23.05.2016 = 16.400,00 €</span>
<svg style="left:253.05px;top:363.92px" width="8.500" height="7.700" viewBox="0 0 8 8" preserveAspectRatio="none"><rect x="0.500" y="0.500" width="7" height="7" fill="#fff" stroke="#787878"/><path d="M1.600 4h4.800M4 1.600v4.800" stroke="#000" stroke-width="1"/></svg>
<div class="fo" style="left:269.40px;top:360.72px"></div>
<span class="t" style="left:286.70px;top:361.42px;line-height:14px;color:#000;letter-spacing:-0.007px;">Zweig: 1. Lieferschein Ladenbackofen Mini City 7 23.11.2016 (schupper) - gedruckt am 23.05.2016 = 16.400,00 €</span>
<svg style="left:253.05px;top:377.85px" width="8.500" height="7.700" viewBox="0 0 8 8" preserveAspectRatio="none"><rect x="0.500" y="0.500" width="7" height="7" fill="#fff" stroke="#787878"/><path d="M1.600 4h4.800M4 1.600v4.800" stroke="#000" stroke-width="1"/></svg>
<div class="fo" style="left:269.40px;top:374.65px"></div>
<span class="t" style="left:286.70px;top:375.35px;line-height:14px;color:#8c8c8c;letter-spacing:0.016px;">Zweig: 1. Auftrag Ladenbackofen Mini City 7 23.11.2016 (schupper) - gedruckt am 22.04.2016 = 32.800,00 €</span>
<svg style="left:253.05px;top:391.78px" width="8.500" height="7.700" viewBox="0 0 8 8" preserveAspectRatio="none"><rect x="0.500" y="0.500" width="7" height="7" fill="#fff" stroke="#787878"/><path d="M1.600 4h4.800M4 1.600v4.800" stroke="#000" stroke-width="1"/></svg>
<div class="fo" style="left:269.40px;top:388.58px"></div>
<span class="t" style="left:286.70px;top:389.28px;line-height:14px;color:#8c8c8c;letter-spacing:0.007px;">Zweig: 1. Angebot Ladenbackofen Mini City 7 23.11.2016 (schupper) - gedruckt am 02.04.2016 = 32.800,00 €</span>
<svg style="left:234.65px;top:405.71px" width="8.500" height="7.700" viewBox="0 0 8 8" preserveAspectRatio="none"><rect x="0.500" y="0.500" width="7" height="7" fill="#fff" stroke="#787878"/><path d="M1.600 4h4.800" stroke="#000" stroke-width="1"/></svg>
<div class="fo" style="left:251.00px;top:402.51px"></div>
<span class="t b" style="left:268.70px;top:403.21px;line-height:14px;color:#000;letter-spacing:0.075px;">Vorgänge (nach Vorgangsart)</span>
<svg style="left:253.05px;top:419.64px" width="8.500" height="7.700" viewBox="0 0 8 8" preserveAspectRatio="none"><rect x="0.500" y="0.500" width="7" height="7" fill="#fff" stroke="#787878"/><path d="M1.600 4h4.800" stroke="#000" stroke-width="1"/></svg>
<div class="fo" style="left:269.40px;top:416.44px"></div>
<span class="t b" style="left:286.70px;top:417.14px;line-height:14px;color:#1b1b8f;letter-spacing:0.218px;">Angebote</span>
<svg style="left:271.45px;top:433.57px" width="8.500" height="7.700" viewBox="0 0 8 8" preserveAspectRatio="none"><rect x="0.500" y="0.500" width="7" height="7" fill="#fff" stroke="#787878"/><path d="M1.600 4h4.800M4 1.600v4.800" stroke="#000" stroke-width="1"/></svg>
<div class="fo" style="left:287.80px;top:430.37px"></div>
<span class="t" style="left:305.50px;top:431.07px;line-height:14px;color:#000;letter-spacing:-0.009px;">Zweig: 1. Nachtragsangebot Ladenbackofen Mini City 7 15.05.2017 (schupper)</span>
<svg style="left:271.45px;top:447.50px" width="8.500" height="7.700" viewBox="0 0 8 8" preserveAspectRatio="none"><rect x="0.500" y="0.500" width="7" height="7" fill="#fff" stroke="#787878"/><path d="M1.600 4h4.800M4 1.600v4.800" stroke="#000" stroke-width="1"/></svg>
<div class="fo" style="left:287.80px;top:444.30px"></div>
<span class="t" style="left:305.50px;top:445.00px;line-height:14px;color:#8c8c8c;letter-spacing:0.004px;">Zweig: 1. Angebot Ladenbackofen Mini City 7 23.11.2016 (schupper) - gedruckt am 02.04.2016 = 32.800,00 €</span>
<svg style="left:253.05px;top:461.43px" width="8.500" height="7.700" viewBox="0 0 8 8" preserveAspectRatio="none"><rect x="0.500" y="0.500" width="7" height="7" fill="#fff" stroke="#787878"/><path d="M1.600 4h4.800" stroke="#000" stroke-width="1"/></svg>
<div class="fo" style="left:269.40px;top:458.23px"></div>
<span class="t b" style="left:286.70px;top:458.93px;line-height:14px;color:#1b1b8f;letter-spacing:0.139px;">Aufträge</span>
<svg style="left:271.45px;top:475.36px" width="8.500" height="7.700" viewBox="0 0 8 8" preserveAspectRatio="none"><rect x="0.500" y="0.500" width="7" height="7" fill="#fff" stroke="#787878"/><path d="M1.600 4h4.800M4 1.600v4.800" stroke="#000" stroke-width="1"/></svg>
<div class="fo" style="left:287.80px;top:472.16px"></div>
<span class="t" style="left:305.50px;top:472.86px;line-height:14px;color:#8c8c8c;letter-spacing:0.014px;">Zweig: 1. Auftrag Ladenbackofen Mini City 7 23.11.2016 (schupper) - gedruckt am 22.04.2016 = 32.800,00 €</span>
<svg style="left:253.05px;top:489.29px" width="8.500" height="7.700" viewBox="0 0 8 8" preserveAspectRatio="none"><rect x="0.500" y="0.500" width="7" height="7" fill="#fff" stroke="#787878"/><path d="M1.600 4h4.800" stroke="#000" stroke-width="1"/></svg>
<div class="fo" style="left:269.40px;top:486.09px"></div>
<span class="t b" style="left:286.70px;top:486.79px;line-height:14px;color:#1b1b8f;letter-spacing:0.016px;">Bestellungen</span>
<svg style="left:271.45px;top:503.22px" width="8.500" height="7.700" viewBox="0 0 8 8" preserveAspectRatio="none"><rect x="0.500" y="0.500" width="7" height="7" fill="#fff" stroke="#787878"/><path d="M1.600 4h4.800M4 1.600v4.800" stroke="#000" stroke-width="1"/></svg>
<div class="fo" style="left:287.80px;top:500.02px"></div>
<span class="t" style="left:305.50px;top:500.72px;line-height:14px;color:#8c8c8c;letter-spacing:-0.019px;">Zweig: 1. Bestellung Ladenbackofen Mini City 7 07.12.2016 (fohlinger) - gedruckt am 22.04.2016 = 10.000,00 €</span>
<svg style="left:253.05px;top:517.15px" width="8.500" height="7.700" viewBox="0 0 8 8" preserveAspectRatio="none"><rect x="0.500" y="0.500" width="7" height="7" fill="#fff" stroke="#787878"/><path d="M1.600 4h4.800M4 1.600v4.800" stroke="#000" stroke-width="1"/></svg>
<div class="fo" style="left:269.40px;top:513.95px"></div>
<span class="t b" style="left:286.70px;top:514.65px;line-height:14px;color:#1b1b8f;letter-spacing:-0.012px;">Eingangsrechnungen</span>
<svg style="left:253.05px;top:531.08px" width="8.500" height="7.700" viewBox="0 0 8 8" preserveAspectRatio="none"><rect x="0.500" y="0.500" width="7" height="7" fill="#fff" stroke="#787878"/><path d="M1.600 4h4.800M4 1.600v4.800" stroke="#000" stroke-width="1"/></svg>
<div class="fo" style="left:269.40px;top:527.88px"></div>
<span class="t b" style="left:286.70px;top:528.58px;line-height:14px;color:#1b1b8f;letter-spacing:0.012px;">Lieferscheine</span>
<svg style="left:253.05px;top:545.01px" width="8.500" height="7.700" viewBox="0 0 8 8" preserveAspectRatio="none"><rect x="0.500" y="0.500" width="7" height="7" fill="#fff" stroke="#787878"/><path d="M1.600 4h4.800M4 1.600v4.800" stroke="#000" stroke-width="1"/></svg>
<div class="fo" style="left:269.40px;top:541.81px"></div>
<span class="t b" style="left:286.70px;top:542.51px;line-height:14px;color:#1b1b8f;letter-spacing:0.064px;">Materialbedarfslisten</span>
<svg style="left:253.05px;top:558.94px" width="8.500" height="7.700" viewBox="0 0 8 8" preserveAspectRatio="none"><rect x="0.500" y="0.500" width="7" height="7" fill="#fff" stroke="#787878"/><path d="M1.600 4h4.800M4 1.600v4.800" stroke="#000" stroke-width="1"/></svg>
<div class="fo" style="left:269.40px;top:555.74px"></div>
<span class="t b" style="left:286.70px;top:556.44px;line-height:14px;color:#1b1b8f;letter-spacing:0.147px;">Rechnungen</span>
<svg style="left:234.65px;top:572.87px" width="8.500" height="7.700" viewBox="0 0 8 8" preserveAspectRatio="none"><rect x="0.500" y="0.500" width="7" height="7" fill="#fff" stroke="#787878"/><path d="M1.600 4h4.800" stroke="#000" stroke-width="1"/></svg>
<div class="fo" style="left:251.00px;top:569.67px"></div>
<span class="t b" style="left:268.70px;top:570.37px;line-height:14px;color:#000;letter-spacing:0.065px;">Vorgänge (nach Auftrag)</span>
<svg style="left:253.05px;top:586.80px" width="8.500" height="7.700" viewBox="0 0 8 8" preserveAspectRatio="none"><rect x="0.500" y="0.500" width="7" height="7" fill="#fff" stroke="#787878"/><path d="M1.600 4h4.800M4 1.600v4.800" stroke="#000" stroke-width="1"/></svg>
<div class="fo" style="left:269.40px;top:583.60px"></div>
<span class="t b" style="left:286.70px;top:584.30px;line-height:14px;color:#8c8c8c;letter-spacing:-0.030px;">1. Auftrag AB160002 Ladenbackofen Mini City 7</span>
<svg style="left:234.65px;top:600.73px" width="8.500" height="7.700" viewBox="0 0 8 8" preserveAspectRatio="none"><rect x="0.500" y="0.500" width="7" height="7" fill="#fff" stroke="#787878"/><path d="M1.600 4h4.800" stroke="#000" stroke-width="1"/></svg>
<div class="fo" style="left:251.00px;top:597.53px"></div>
<span class="t b" style="left:268.70px;top:598.23px;line-height:14px;color:#000;letter-spacing:0.076px;">Vorgänge (nach Adresse)</span>
<svg style="left:253.05px;top:614.66px" width="8.500" height="7.700" viewBox="0 0 8 8" preserveAspectRatio="none"><rect x="0.500" y="0.500" width="7" height="7" fill="#fff" stroke="#787878"/><path d="M1.600 4h4.800M4 1.600v4.800" stroke="#000" stroke-width="1"/></svg>
<div class="fo" style="left:269.40px;top:611.46px"></div>
<span class="t b" style="left:286.70px;top:612.16px;line-height:14px;color:#1b1b8f;letter-spacing:-0.037px;">fohlinger - Firma Fred Fohlinger GmbH, Bautzen (Lieferant)</span>
<svg style="left:253.05px;top:628.59px" width="8.500" height="7.700" viewBox="0 0 8 8" preserveAspectRatio="none"><rect x="0.500" y="0.500" width="7" height="7" fill="#fff" stroke="#787878"/><path d="M1.600 4h4.800M4 1.600v4.800" stroke="#000" stroke-width="1"/></svg>
<div class="fo" style="left:269.40px;top:625.39px"></div>
<span class="t b" style="left:286.70px;top:626.09px;line-height:14px;color:#1b1b8f;letter-spacing:0.027px;">schupper - Bäckerei Paul Schupper, Dresden (Kunde)</span>
<svg style="left:234.65px;top:642.52px" width="8.500" height="7.700" viewBox="0 0 8 8" preserveAspectRatio="none"><rect x="0.500" y="0.500" width="7" height="7" fill="#fff" stroke="#787878"/><path d="M1.600 4h4.800M4 1.600v4.800" stroke="#000" stroke-width="1"/></svg>
<div class="fo" style="left:251.00px;top:639.32px"></div>
<span class="t b" style="left:268.70px;top:640.02px;line-height:14px;color:#000;letter-spacing:0.064px;">Notizen &amp; Termine</span>
<svg style="left:234.65px;top:656.45px" width="8.500" height="7.700" viewBox="0 0 8 8" preserveAspectRatio="none"><rect x="0.500" y="0.500" width="7" height="7" fill="#fff" stroke="#787878"/><path d="M1.600 4h4.800M4 1.600v4.800" stroke="#000" stroke-width="1"/></svg>
<div class="fo" style="left:251.00px;top:653.25px"></div>
<span class="t b" style="left:268.70px;top:653.95px;line-height:14px;color:#000;letter-spacing:0.021px;">Verknüpfungen</span>
<svg style="left:234.65px;top:670.38px" width="8.500" height="7.700" viewBox="0 0 8 8" preserveAspectRatio="none"><rect x="0.500" y="0.500" width="7" height="7" fill="#fff" stroke="#787878"/><path d="M1.600 4h4.800M4 1.600v4.800" stroke="#000" stroke-width="1"/></svg>
<div class="fo" style="left:251.00px;top:667.18px"></div>
<span class="t b" style="left:268.70px;top:667.88px;line-height:14px;color:#000;letter-spacing:0.032px;">Rechnungsausgänge</span>
<svg style="left:234.65px;top:684.31px" width="8.500" height="7.700" viewBox="0 0 8 8" preserveAspectRatio="none"><rect x="0.500" y="0.500" width="7" height="7" fill="#fff" stroke="#787878"/><path d="M1.600 4h4.800M4 1.600v4.800" stroke="#000" stroke-width="1"/></svg>
<div class="fo" style="left:251.00px;top:681.11px"></div>
<span class="t b" style="left:268.70px;top:681.81px;line-height:14px;color:#000;letter-spacing:0.049px;">Rechnungseingänge</span>
<svg style="left:234.65px;top:698.24px" width="8.500" height="7.700" viewBox="0 0 8 8" preserveAspectRatio="none"><rect x="0.500" y="0.500" width="7" height="7" fill="#fff" stroke="#787878"/><path d="M1.600 4h4.800M4 1.600v4.800" stroke="#000" stroke-width="1"/></svg>
<div class="fo" style="left:251.00px;top:695.04px"></div>
<span class="t b" style="left:268.70px;top:695.74px;line-height:14px;color:#000;letter-spacing:0.006px;">Nachkalkulation</span>
<svg style="left:234.65px;top:712.17px" width="8.500" height="7.700" viewBox="0 0 8 8" preserveAspectRatio="none"><rect x="0.500" y="0.500" width="7" height="7" fill="#fff" stroke="#787878"/><path d="M1.600 4h4.800M4 1.600v4.800" stroke="#000" stroke-width="1"/></svg>
<div class="fo" style="left:251.00px;top:708.97px"></div>
<span class="t b" style="left:268.70px;top:709.67px;line-height:14px;color:#000;letter-spacing:-0.029px;">Historie</span>
<div style="position:absolute;left:1093.60px;top:164.40px;width:228.80px;height:579.72px;background:#fff;"></div>
<div style="position:absolute;left:1093.60px;top:164.40px;width:119.60px;height:579.72px;background:#f0f0f0;"></div>
<div style="position:absolute;left:1093.60px;top:164.40px;width:228.80px;height:15.60px;background:linear-gradient(180deg,#fdfdfd,#ececec);"></div>
<div style="position:absolute;left:1322.90px;top:164.40px;width:15.30px;height:579.72px;background:#f0f0f0;"></div>
<div style="position:absolute;left:1323.40px;top:181.00px;width:14.30px;height:328.80px;background:#cdcdcd;"></div>
<svg style="left:1322.9px;top:165px" width="16" height="580" viewBox="0 0 16 580"><path d="M4.200 9.800l3.600-3.600 3.600 3.600M4.200 570.600l3.600 3.600 3.600-3.600" fill="none" stroke="#333" stroke-width="1.300"/></svg>
<svg style="left:1093px;top:164px" width="231" height="582" viewBox="1093 164 231 582"><g stroke="#9c9c9c" stroke-width="1" fill="none"><path d="M1093.6 179.50H1322.4M1093.6 195.50H1322.4M1093.6 211.50H1322.4M1093.6 227.50H1322.4M1093.6 242.50H1322.4M1093.6 258.50H1322.4M1093.6 274.50H1322.4M1093.6 289.50H1322.4M1093.6 305.50H1322.4M1093.6 321.50H1322.4M1093.6 336.50H1322.4M1093.6 352.50H1322.4M1093.6 368.50H1322.4M1093.6 383.50H1322.4M1093.6 399.50H1322.4M1093.6 415.50H1322.4M1093.6 430.50H1322.4M1093.6 446.50H1322.4M1093.6 462.50H1322.4M1093.6 477.50H1322.4M1093.6 493.50H1322.4M1093.6 509.50H1322.4M1093.6 524.50H1322.4M1093.6 540.50H1322.4M1093.6 556.50H1322.4M1093.6 571.50H1322.4M1093.6 587.50H1322.4M1093.6 603.50H1322.4M1093.6 618.50H1322.4M1093.6 634.50H1322.4M1093.6 650.50H1322.4M1093.6 665.50H1322.4M1093.6 681.50H1322.4M1093.6 697.50H1322.4M1093.6 712.50H1322.4M1093.6 728.50H1322.4M1093.6 744.50H1322.4M1093.6 164.90H1322.4M1108.5 164.4V744.1M1213.5 164.4V744.1M1322.5 164.4V744.1"/></g><path d="M1098.400 183.600l5.800 4.600-5.800 4.600z" fill="#000"/></svg>
<div style="position:absolute;left:1093.60px;top:164.20px;width:244.10px;height:1.50px;background:#7c7c7c;"></div>
<span class="t b" style="left:1129.80px;top:166.40px;line-height:14px;color:#111;letter-spacing:0.028px;">Eigenschaft</span>
<span class="t b" style="left:1253.80px;top:166.40px;line-height:14px;color:#111;letter-spacing:0.531px;">Wert</span>
<span class="t b" style="left:1110.70px;top:182.23px;line-height:14px;color:#000;">Allgemeines</span>
<span class="t" style="left:1118.10px;top:197.90px;line-height:14px;color:#1a1a1a;letter-spacing:0.044px;">Projektname</span>
<span class="t" style="left:1215.10px;top:197.90px;line-height:14px;color:#111;letter-spacing:0.011px;">Ladenbackofen</span>
<span class="t" style="left:1118.10px;top:213.57px;line-height:14px;color:#1a1a1a;letter-spacing:-0.072px;">Auftragsnummer</span>
<span class="t" style="left:1215.10px;top:213.57px;line-height:14px;color:#111;letter-spacing:-0.010px;">AB160002</span>
<span class="t" style="left:1118.10px;top:229.24px;line-height:14px;color:#1a1a1a;letter-spacing:0.088px;">Kennung</span>
<span class="t" style="left:1215.10px;top:229.24px;line-height:14px;color:#111;">Zweig</span>
<span class="t" style="left:1118.10px;top:244.91px;line-height:14px;color:#1a1a1a;letter-spacing:0.275px;">Kurztext</span>
<span class="t" style="left:1215.10px;top:244.91px;line-height:14px;color:#111;letter-spacing:-0.006px;">Ladenbackofen Mini …</span>
<span class="t" style="left:1118.10px;top:260.58px;line-height:14px;color:#1a1a1a;">Thema</span>
<span class="t" style="left:1215.10px;top:260.58px;line-height:14px;color:#111;">Lieferant</span>
<span class="t" style="left:1118.10px;top:276.25px;line-height:14px;color:#1a1a1a;">Vorgangsart</span>
<span class="t" style="left:1215.10px;top:276.25px;line-height:14px;color:#111;letter-spacing:-0.040px;">1. Eingangsrechnung</span>
<span class="t" style="left:1118.10px;top:291.92px;line-height:14px;color:#1a1a1a;">Status</span>
<span class="t" style="left:1215.10px;top:291.92px;line-height:14px;color:#111;letter-spacing:-0.041px;">Abgeschlossen</span>
<span class="t" style="left:1118.10px;top:307.59px;line-height:14px;color:#1a1a1a;">Belegdatum</span>
<span class="t" style="left:1215.10px;top:307.59px;line-height:14px;color:#111;letter-spacing:0.134px;">31.05.2016</span>
<span class="t" style="left:1118.10px;top:323.26px;line-height:14px;color:#1a1a1a;">Belegnummer</span>
<span class="t" style="left:1215.10px;top:323.26px;line-height:14px;color:#111;letter-spacing:0.012px;">ER170002</span>
<span class="t" style="left:1118.10px;top:338.93px;line-height:14px;color:#1a1a1a;">Nettobetrag</span>
<span class="t" style="left:1215.10px;top:338.93px;line-height:14px;color:#111;letter-spacing:0.139px;">13.205,00 €</span>
<span class="t" style="left:1118.10px;top:354.61px;line-height:14px;color:#1a1a1a;">USt.</span>
<span class="t" style="left:1215.10px;top:354.61px;line-height:14px;color:#111;letter-spacing:0.167px;">2.508,95 €</span>
<span class="t" style="left:1118.10px;top:370.27px;line-height:14px;color:#1a1a1a;">Bruttobetrag</span>
<span class="t" style="left:1215.10px;top:370.27px;line-height:14px;color:#111;letter-spacing:0.139px;">15.713,95 €</span>
<span class="t" style="left:1118.10px;top:385.94px;line-height:14px;color:#1a1a1a;">Druckdatum</span>
<span class="t" style="left:1215.10px;top:385.94px;line-height:14px;color:#111;letter-spacing:0.117px;">15.05.2017 12:04:48</span>
<span class="t" style="left:1118.10px;top:401.62px;line-height:14px;color:#1a1a1a;">Druckstatus</span>
<span class="t" style="left:1215.10px;top:401.62px;line-height:14px;color:#111;">Gedruckt</span>
<span class="t" style="left:1118.10px;top:417.28px;line-height:14px;color:#1a1a1a;letter-spacing:-0.009px;">Erstanlagedatum</span>
<span class="t" style="left:1215.10px;top:417.28px;line-height:14px;color:#111;letter-spacing:0.117px;">15.05.2017 11:55:48</span>
<span class="t" style="left:1118.10px;top:432.95px;line-height:14px;color:#1a1a1a;">Eigentümer</span>
<span class="t" style="left:1215.10px;top:432.95px;line-height:14px;color:#111;">Admin</span>
<span class="t" style="left:1118.10px;top:448.62px;line-height:14px;color:#1a1a1a;">Änderungsdatum</span>
<span class="t" style="left:1215.10px;top:448.62px;line-height:14px;color:#111;letter-spacing:0.117px;">15.05.2017 12:04:48</span>
<span class="t" style="left:1118.10px;top:464.29px;line-height:14px;color:#1a1a1a;">Bearbeiter</span>
<span class="t" style="left:1215.10px;top:464.29px;line-height:14px;color:#111;">Admin</span>
<span class="t b" style="left:1110.70px;top:479.96px;line-height:14px;color:#000;">Anschrift</span>
<span class="t" style="left:1118.10px;top:495.63px;line-height:14px;color:#1a1a1a;">Kurzname</span>
<span class="t" style="left:1215.10px;top:495.63px;line-height:14px;color:#111;">fohlinger</span>
<span class="t" style="left:1118.10px;top:511.31px;line-height:14px;color:#1a1a1a;">Konto</span>
<span class="t" style="left:1215.10px;top:511.31px;line-height:14px;color:#111;letter-spacing:-0.073px;">76000</span>
<span class="t" style="left:1118.10px;top:526.98px;line-height:14px;color:#1a1a1a;">Name 1</span>
<span class="t" style="left:1215.10px;top:526.98px;line-height:14px;color:#111;">Firma</span>
<span class="t" style="left:1118.10px;top:542.65px;line-height:14px;color:#1a1a1a;">Name 2</span>
<span class="t" style="left:1215.10px;top:542.65px;line-height:14px;color:#111;letter-spacing:-0.042px;">Fred Fohlinger GmbH</span>
<span class="t" style="left:1118.10px;top:558.32px;line-height:14px;color:#1a1a1a;">Straße</span>
<span class="t" style="left:1215.10px;top:558.32px;line-height:14px;color:#111;letter-spacing:-0.017px;">Frankenallee 78</span>
<span class="t" style="left:1118.10px;top:573.99px;line-height:14px;color:#1a1a1a;">PLZ</span>
<span class="t" style="left:1215.10px;top:573.99px;line-height:14px;color:#111;letter-spacing:-0.073px;">02625</span>
<span class="t" style="left:1118.10px;top:589.66px;line-height:14px;color:#1a1a1a;">Ort</span>
<span class="t" style="left:1215.10px;top:589.66px;line-height:14px;color:#111;">Bautzen</span>
<span class="t" style="left:1118.10px;top:605.33px;line-height:14px;color:#1a1a1a;">Briefanrede</span>
<span class="t" style="left:1215.10px;top:605.33px;line-height:14px;color:#111;">r Herr Fischer,</span>
<span class="t" style="left:1118.10px;top:621.00px;line-height:14px;color:#1a1a1a;">Telefon</span>
<span class="t" style="left:1215.10px;top:621.00px;line-height:14px;color:#111;letter-spacing:-0.029px;">03591/35689</span>
<span class="t" style="left:1118.10px;top:636.67px;line-height:14px;color:#1a1a1a;">Telefax</span>
<span class="t" style="left:1215.10px;top:636.67px;line-height:14px;color:#111;letter-spacing:-0.029px;">03591/35680</span>
<span class="t" style="left:1118.10px;top:652.34px;line-height:14px;color:#1a1a1a;">Lieferadresse</span>
<span class="t" style="left:1215.10px;top:652.34px;line-height:14px;color:#111;">schupper</span>
<span class="t" style="left:1118.10px;top:668.01px;line-height:14px;color:#1a1a1a;letter-spacing:0.151px;">Lieferadresse Na…</span>
<span class="t" style="left:1215.10px;top:668.01px;line-height:14px;color:#111;">Bäckerei</span>
<span class="t" style="left:1118.10px;top:683.68px;line-height:14px;color:#1a1a1a;letter-spacing:0.151px;">Lieferadresse Na…</span>
<span class="t" style="left:1215.10px;top:683.68px;line-height:14px;color:#111;">Paul Schupper</span>
<span class="t" style="left:1118.10px;top:699.35px;line-height:14px;color:#1a1a1a;letter-spacing:0.151px;">Lieferadresse Na…</span>
<span class="t" style="left:1215.10px;top:699.35px;line-height:14px;color:#111;">Meisterbetrieb</span>
<span class="t" style="left:1118.10px;top:715.02px;line-height:14px;color:#1a1a1a;letter-spacing:0.160px;">Lieferadresse Str…</span>
<span class="t" style="left:1215.10px;top:715.02px;line-height:14px;color:#111;letter-spacing:0.009px;">Schloßstraße 57</span>
<span class="t" style="left:1118.10px;top:730.69px;line-height:14px;color:#1a1a1a;">Lieferadresse PLZ</span>
<span class="t" style="left:1215.10px;top:730.69px;line-height:14px;color:#111;letter-spacing:-0.013px;">01067</span>
<div style="position:absolute;left:217.20px;top:134.30px;width:532.20px;height:46.40px;border:1.700px solid #e06a4a;box-sizing:border-box;"></div>
<div style="position:absolute;left:1092.00px;top:160.60px;width:248.40px;height:584.40px;border:1.900px solid #da5836;border-radius:3px;box-sizing:border-box;"></div>
</div>
</body>
</html>
